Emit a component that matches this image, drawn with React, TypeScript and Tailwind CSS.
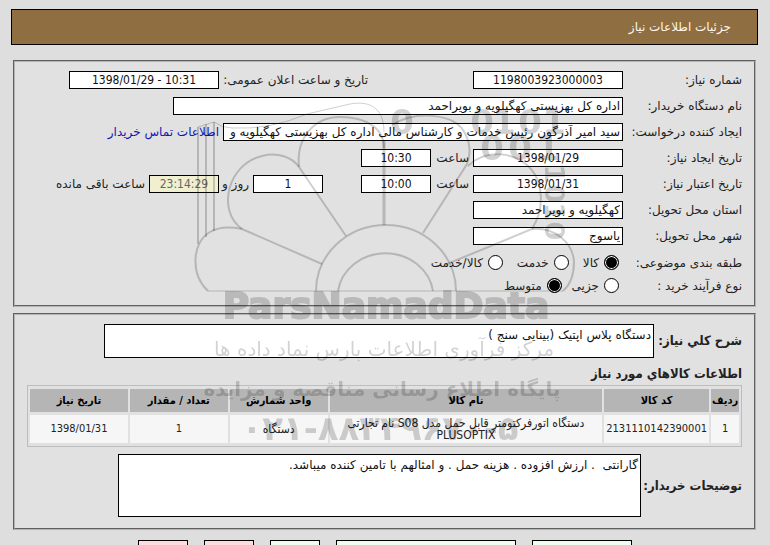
import type { ReactNode } from "react"

const box = "h-[18px] border border-black bg-white text-xs leading-4 text-[#111]"
const num = "text-center font-['DejaVu_Sans_Condensed','DejaVu_Sans',sans-serif]"
const strong = "font-['DejaVu_Sans_Condensed','DejaVu_Sans',sans-serif] text-[13px] leading-4 font-bold whitespace-nowrap"
const panel = "border-2 border-[#b4b4b4] bg-[#e1e1e1] px-3 [border-style:groove]"

const columns = [
  { title: "ردیف", width: "w-[4%]" },
  { title: "کد کالا", width: "w-[15%]" },
  { title: "نام کالا", width: "w-[39%]" },
  { title: "واحد شمارش", width: "w-[14%]" },
  { title: "تعداد / مقدار", width: "w-[14%]" },
  { title: "تاریخ نیاز", width: "w-[14%]" },
]

const items = [
  ["1", "2131110142390001", "دستگاه اتورفرکتومتر قابل حمل مدل S08 نام تجارتی PLUSOPTIX", "دستگاه", "1", "1398/01/31"],
]

const green = "border border-black bg-[#efffef] h-[26px]"
const pink = "border border-black bg-[#ffdcdc] h-[26px]"

function Row({ label, id, children }: { label: string; id: string; children: ReactNode }) {
  return (
    <div className="flex h-[26px] items-center gap-1">
      <label htmlFor={id} className="w-[115px] shrink-0 whitespace-nowrap">
        {label}
      </label>
      {children}
    </div>
  )
}

function Choice({ name, label, checked }: { name: string; label: string; checked?: boolean }) {
  return (
    <label className="flex items-center gap-[5px] whitespace-nowrap">
      <input
        type="radio"
        name={name}
        defaultChecked={checked}
        className="size-[15px] appearance-none rounded-full border border-black bg-white checked:bg-black checked:shadow-[inset_0_0_0_1px_white]"
      />
      {label}
    </label>
  )
}

function Watermark() {
  return (
    <svg
      aria-hidden="true"
      viewBox="0 0 400 360"
      className="pointer-events-none absolute top-[90px] right-[180px] h-[360px] w-[400px] overflow-visible"
    >
      <g fill="none" stroke="#000" strokeOpacity="0.19" strokeWidth="2">
        <path d="M18 201H373" strokeWidth="1" />
        <path d="M126 201a70 66 0 0 1 140 0M148 201a48 44 0 0 1 95 0" />
        <path d="M8 154V37M16 147V34M24 141V32" />
        <path d="M8 37L24 32Q32 38 42 38Q80 40 117 24L160 14C182 10 194 20 194 42" strokeWidth="1" />
        <path d="M18 201C0 184 2 152 20 142C30 136 42 137 52 139L132 174" />
        <path d="M52 139C26 120 38 74 72 66C88 62 102 67 109 77L156 146" />
        <path d="M109 77C106 48 124 27 150 27C176 27 194 38 194 58" />
        <path d="M194 50V135" strokeWidth="3" />
        <path d="M202 35C226 20 262 24 273 40C282 54 280 66 277 74L233 143" />
        <path d="M278 76C296 58 326 62 341 79C354 94 354 120 342 139L257 174" />
        <path d="M342 139C364 137 383 152 384 172C384 186 380 195 373 201" />
      </g>
      <g
        fill="#000"
        opacity="0.18"
        className="font-['DejaVu_Sans',sans-serif] font-bold"
        direction="ltr"
        textAnchor="middle"
      >
        <g fontSize="34">
          <text x="212" y="44">0</text>
          <text x="292" y="44">0</text>
          <text x="314" y="44">1</text>
          <text x="340" y="44">0</text>
          <text x="364" y="44">1</text>
          <text x="302" y="70">0</text>
          <text x="330" y="70">0</text>
          <text x="358" y="70">1</text>
        </g>
        <g fontSize="27" transform="translate(355 0)">
          <text transform="translate(0 84) rotate(90)">1</text>
          <text transform="translate(0 104) rotate(90)">0</text>
          <text transform="translate(0 122) rotate(90)">1</text>
          <text transform="translate(0 141) rotate(90)">0</text>
        </g>
        <text x="196" y="228" fontSize="36" stroke="#000" strokeWidth="2">
          ParsNamadData
        </text>
        <text x="194" y="266" direction="rtl" fontSize="20" className="font-normal">
          مرکز فرآوری اطلاعات پارس نماد داده ها
        </text>
        <text x="192" y="306" direction="rtl" fontSize="20">
          پایگاه اطلاع رسانی مناقصه و مزایده
        </text>
        <text x="190" y="350" fontSize="34">
          ۰۲۱-۸۸۳۴۹۶۷۰-۵
        </text>
      </g>
    </svg>
  )
}

export default function App() {
  return (
    <div
      dir="rtl"
      className="relative h-screen overflow-hidden bg-[#dedede] pt-[9px] pr-3 pl-[11px] font-['DejaVu_Sans',sans-serif] text-xs leading-4 text-[#222]"
    >
      <header className="flex h-9 items-center border border-black bg-[#8f6e41] px-[26px] text-[#fff6e8]">
        <h1>جزئیات اطلاعات نیاز</h1>
      </header>

      <main className="mx-0.5">
        <section className={`${panel} mt-[15px] pt-[5px] pb-2`}>
          <Row label="شماره نیاز:" id="number">
            <input id="number" readOnly defaultValue="1198003923000003" className={`${box} ${num} w-[150px]`} />
            <label htmlFor="announced" className="ms-[101px] w-[145px] whitespace-nowrap">
              تاریخ و ساعت اعلان عمومی:
            </label>
            <input
              id="announced"
              dir="ltr"
              readOnly
              defaultValue="1398/01/29 - 10:31"
              className={`${box} ${num} w-[150px]`}
            />
          </Row>
          <Row label="نام دستگاه خریدار:" id="buyer">
            <input
              id="buyer"
              readOnly
              defaultValue="اداره کل بهزیستی کهگیلویه و بویراحمد"
              className={`${box} w-[450px] px-0.5`}
            />
          </Row>
          <Row label="ایجاد کننده درخواست:" id="creator">
            <input
              id="creator"
              readOnly
              defaultValue="سید امیر آذرگون رئیس خدمات و کارشناس مالی اداره کل بهزیستی کهگیلویه و"
              className={`${box} w-[400px] px-0.5`}
            />
            <a href="#contact" className="whitespace-nowrap text-[#1414b4]">
              اطلاعات تماس خریدار
            </a>
          </Row>
          <Row label="تاریخ ایجاد نیاز:" id="created">
            <input id="created" readOnly defaultValue="1398/01/29" className={`${box} ${num} w-[150px]`} />
            <label htmlFor="created-time" className="w-[34px]">
              ساعت
            </label>
            <input id="created-time" readOnly defaultValue="10:30" className={`${box} ${num} w-[70px]`} />
          </Row>
          <Row label="تاریخ اعتبار نیاز:" id="valid">
            <input id="valid" readOnly defaultValue="1398/01/31" className={`${box} ${num} w-[150px]`} />
            <label htmlFor="valid-time" className="w-[34px]">
              ساعت
            </label>
            <input id="valid-time" readOnly defaultValue="10:00" className={`${box} ${num} w-[70px]`} />
            <input id="days" readOnly defaultValue="1" className={`${box} ${num} ms-[34px] w-[70px]`} />
            <label htmlFor="days" className="w-[26px] whitespace-nowrap">
              روز و
            </label>
            <input
              id="left"
              readOnly
              defaultValue="23:14:29"
              className={`${num} h-[18px] w-[70px] border border-black bg-[#f0f0d0] text-xs leading-4 text-[#666]`}
            />
            <label htmlFor="left" className="whitespace-nowrap">
              ساعت باقی مانده
            </label>
          </Row>
          <Row label="استان محل تحویل:" id="province">
            <input id="province" readOnly defaultValue="کهگیلویه و بویراحمد" className={`${box} w-[150px] px-0.5`} />
          </Row>
          <Row label="شهر محل تحویل:" id="city">
            <input id="city" readOnly defaultValue="یاسوج" className={`${box} w-[150px] px-0.5`} />
          </Row>

          <div role="radiogroup" aria-label="طبقه بندی موضوعی" className="mt-0.5 flex h-[23px] items-center gap-3.5">
            <span className="-me-2.5 w-[119px]">طبقه بندی موضوعی:</span>
            <Choice name="category" label="کالا" checked />
            <Choice name="category" label="خدمت" />
            <Choice name="category" label="کالا/خدمت" />
          </div>
          <div role="radiogroup" aria-label="نوع فرآیند خرید" className="flex h-[23px] items-center gap-2.5">
            <span className="-me-1.5 w-[119px]">نوع فرآیند خرید :</span>
            <Choice name="process" label="جزیی" />
            <Choice name="process" label="متوسط" checked />
          </div>
        </section>

        <section className={`${panel} mt-1.5 pt-[9px] pb-[11px]`}>
          <div className="flex items-center gap-1.5">
            <label htmlFor="summary" className={`${strong} w-[82px] shrink-0`}>
              شرح کلي نیاز:
            </label>
            <textarea
              id="summary"
              readOnly
              defaultValue="دستگاه پلاس اپتیک (بینایی سنج )"
              className={`${box} h-[34px] w-[550px] resize-none px-0.5 pt-0.5`}
            />
          </div>
          <h2 className={`${strong} mt-2 mb-[3px]`}>اطلاعات کالاهاي مورد نیاز</h2>
          <table
            className={`${num} w-full table-fixed border-separate border-spacing-x-0.5 border-spacing-y-[3px] border border-[#bdbdbd] leading-3`}
          >
            <thead>
              <tr className="h-[23px]">
                {columns.map((c) => (
                  <th
                    key={c.title}
                    className={`${c.width} bg-[#b5b5b5] text-[11px] leading-3 font-bold whitespace-nowrap text-black`}
                  >
                    {c.title}
                  </th>
                ))}
              </tr>
            </thead>
            <tbody>
              {items.map((item) => (
                <tr key={item[0]} className="h-7">
                  {item.map((value, i) => (
                    <td
                      key={i}
                      className={`bg-[#f6f6f6] leading-3 ${i === 2 || i === 3 ? "text-xs/3" : "text-[11px]"}`}
                    >
                      {value}
                    </td>
                  ))}
                </tr>
              ))}
            </tbody>
          </table>
          <div className="mt-[7px] flex items-center gap-1.5">
            <label htmlFor="notes" className={`${strong} w-[95px] shrink-0`}>
              توضیحات خریدار:
            </label>
            <textarea
              id="notes"
              readOnly
              defaultValue="گارانتی  . ارزش افزوده . هزینه حمل . و امثالهم با تامین کننده میباشد."
              className={`${box} h-[63px] w-[523px] resize-none px-0.5 pt-0.5`}
            />
          </div>
        </section>
      </main>

      <div className="mt-2.5 flex justify-center gap-4">
        <button className={`${green} w-[100px]`}>پاسخ به نیاز</button>
        <button className={`${green} w-[180px]`}>مشاهده اسناد پیوست</button>
        <button className={`${green} w-[50px]`}>چاپ</button>
        <button className={`${pink} w-[50px]`}>بازگشت</button>
        <button className={`${pink} w-[50px]`}>خروج</button>
      </div>
      <Watermark />
    </div>
  )
}
